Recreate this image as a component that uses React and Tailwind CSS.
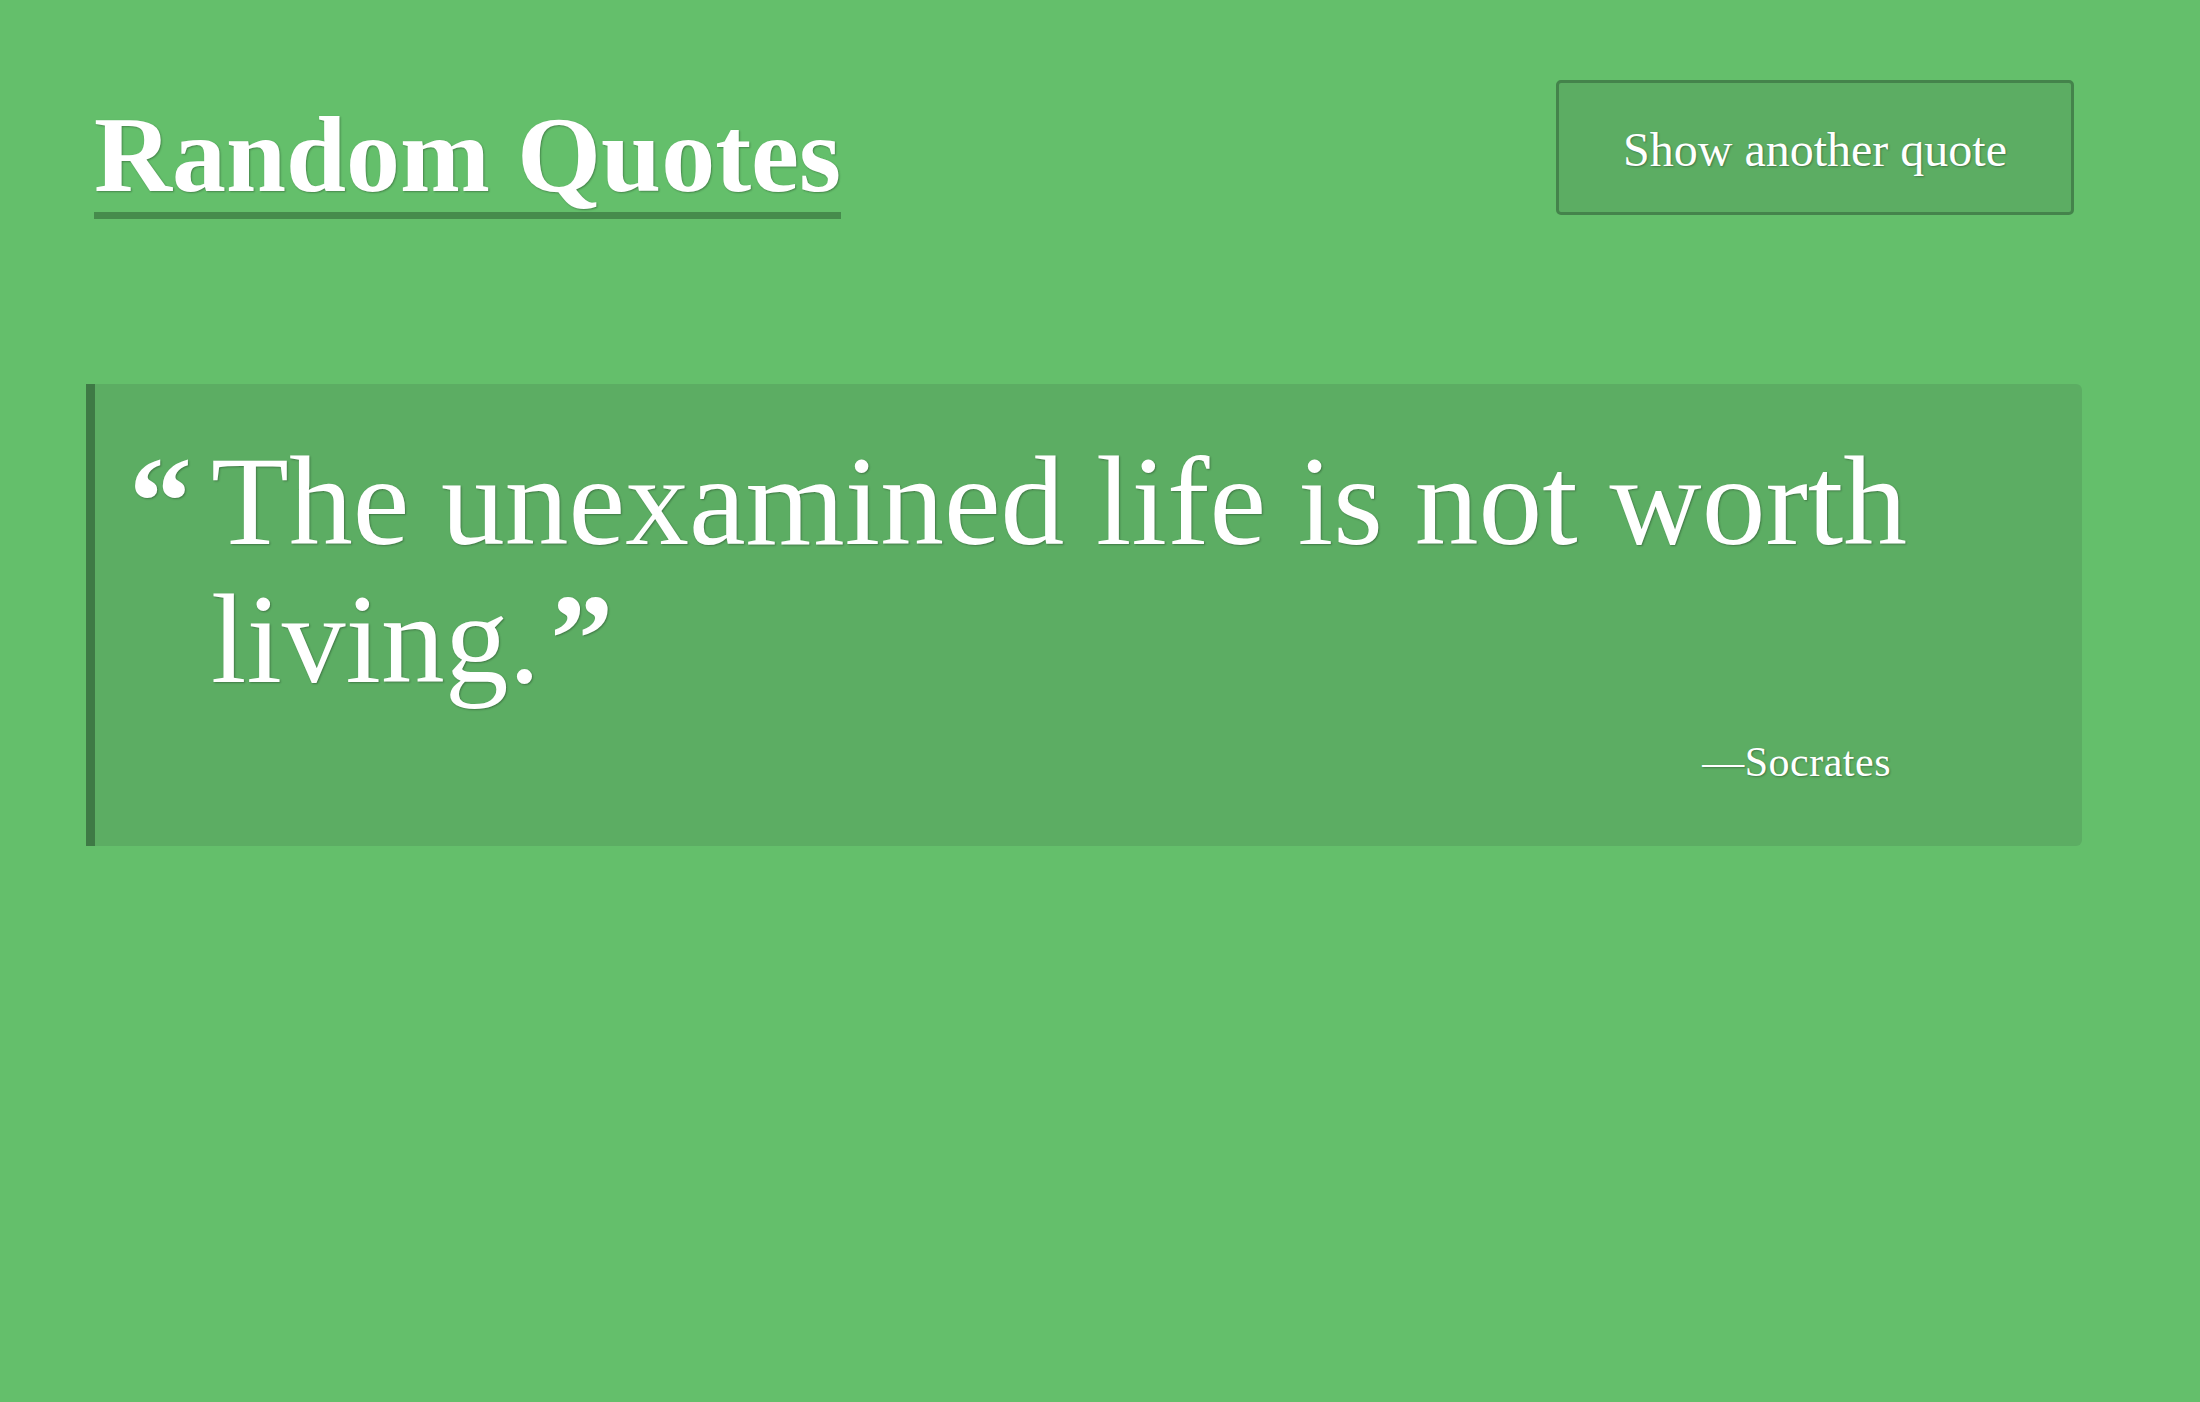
export default function App() {
  const serif = { fontFamily: '"Liberation Serif", "Times New Roman", serif' };
  return (
    <div className="min-h-screen bg-[#64bf6b] pl-[86px] pr-[118px] text-white" style={serif}>
      <header className="flex items-start justify-between pt-[80px]">
        <h1 className="ml-[8px] mt-[21px] inline-block border-b-[7px] border-[#468b4c] pb-[3px] text-[108px] font-bold leading-none [text-shadow:1px_1px_2px_rgba(0,0,0,0.3)]">
          Random Quotes
        </h1>
        <button className="mr-[8px] flex h-[135px] w-[518px] items-center justify-center rounded-[5px] border-[3px] border-[#44834b] bg-[#5cad63] pt-[4px] text-[48px] text-white [text-shadow:1px_1px_2px_rgba(0,0,0,0.3)]">
          Show another quote
        </button>
      </header>

      <section className="mt-[165px] rounded-r-[6px] border-l-[9px] border-[#3e7a45] bg-[#5cad63] pb-[52px] pl-[34px] pr-[150px] pt-[48px]">
        <div className="flex items-baseline [text-shadow:1px_1px_2px_rgba(0,0,0,0.3)]">
          <span className="w-[82px] shrink-0 text-[126px] font-bold leading-[138px]">“</span>
          <p className="text-[127.5px] leading-[138px]">
            The unexamined life is not worth living.{' '}
            <span className="ml-[-22px] text-[126px] font-bold">”</span>
          </p>
        </div>
        <div className="mr-[41px] mt-[22px] text-right text-[42px] leading-[63px] tracking-[0.5px] [text-shadow:1px_1px_2px_rgba(0,0,0,0.3)]">
          —Socrates
        </div>
      </section>
    </div>
  );
}
